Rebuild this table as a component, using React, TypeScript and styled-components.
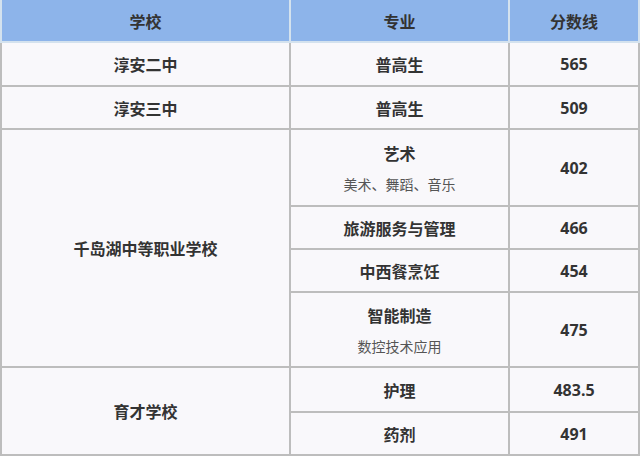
import styled, { createGlobalStyle } from "styled-components";

const GlobalStyle = createGlobalStyle`
  body {
    margin: 0;
    background: #ffffff;
    font-family: "Noto Sans", "Noto Sans CJK SC", sans-serif;
  }
`;

const Table = styled.table`
  width: 640px;
  border-collapse: collapse;
  table-layout: fixed;
  background: #f9f8fb;
  color: #333333;
`;

const HeadCell = styled.th`
  height: 41px;
  padding: 0;
  background: #8db4ea;
  border: 2px solid #d4e2ee;
  border-top: none;
  font-size: 16px;
  font-weight: 700;
  color: #333333;
  text-align: center;
`;

const Cell = styled.td<{ h?: number }>`
  height: ${(p) => (p.h ? `${p.h}px` : "auto")};
  padding: 0;
  border: 2px solid #bdbdbd;
  font-size: 16px;
  font-weight: 700;
  text-align: center;
  vertical-align: middle;
`;

const Major = styled.div`
  font-size: 16px;
  font-weight: 700;
`;

const Note = styled.div`
  margin-top: 9px;
  font-size: 14px;
  font-weight: 400;
  color: #555555;
`;

type Row = { major: string; note?: string; score: string; h: number };
type Group = { school: string; rows: Row[] };

const groups: Group[] = [
  { school: "淳安二中", rows: [{ major: "普高生", score: "565", h: 42 }] },
  { school: "淳安三中", rows: [{ major: "普高生", score: "509", h: 41 }] },
  {
    school: "千岛湖中等职业学校",
    rows: [
      { major: "艺术", note: "美术、舞蹈、音乐", score: "402", h: 75 },
      { major: "旅游服务与管理", score: "466", h: 41 },
      { major: "中西餐烹饪", score: "454", h: 41 },
      { major: "智能制造", note: "数控技术应用", score: "475", h: 73 },
    ],
  },
  {
    school: "育才学校",
    rows: [
      { major: "护理", score: "483.5", h: 43 },
      { major: "药剂", score: "491", h: 41 },
    ],
  },
];

export default function App() {
  return (
    <>
      <GlobalStyle />
      <Table>
        <colgroup>
          <col style={{ width: 289 }} />
          <col style={{ width: 219 }} />
          <col />
        </colgroup>
        <thead>
          <tr>
            <HeadCell>学校</HeadCell>
            <HeadCell>专业</HeadCell>
            <HeadCell>分数线</HeadCell>
          </tr>
        </thead>
        <tbody>
          {groups.map((g) =>
            g.rows.map((r, i) => (
              <tr key={g.school + r.major}>
                {i === 0 && <Cell rowSpan={g.rows.length}>{g.school}</Cell>}
                <Cell h={r.h}>
                  <Major>{r.major}</Major>
                  {r.note && <Note>{r.note}</Note>}
                </Cell>
                <Cell>{r.score}</Cell>
              </tr>
            ))
          )}
        </tbody>
      </Table>
    </>
  );
}
